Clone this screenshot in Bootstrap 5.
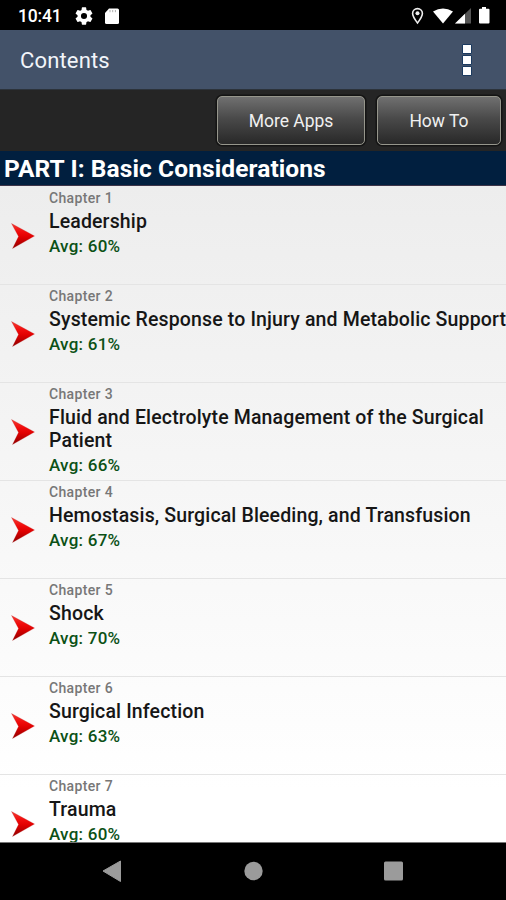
<!DOCTYPE html>
<html lang="en">
<head>
<meta charset="utf-8">
<meta name="viewport" content="width=device-width, initial-scale=1">
<title>Contents</title>
<link href="https://cdn.jsdelivr.net/npm/bootstrap@5.3.0/dist/css/bootstrap.min.css" rel="stylesheet">
<style>
body{font-family:Roboto,"Liberation Sans",sans-serif;height:900px;width:506px;background:#000}
svg{display:block;flex:none}
.status{height:30px;background:#000;color:#fff;padding:1px 15px 0 18px}
.clock{font-size:17.5px;font-weight:500;line-height:30px;width:57px;letter-spacing:-.15px}
.topbar{height:60px;background:#435269;color:#f2f5fa;padding:0 30px 0 20px;border-bottom:1px solid #2c333b}
.topbar h1{font-size:22px;font-weight:400;letter-spacing:.15px;margin:0;padding-top:4px}
.tools{height:61px;background:#252525;padding:0 5px 0 0;gap:12px}
.tool-btn{height:49px;border:1.5px solid #96968c;border-radius:5px;background:linear-gradient(#707070,#4a4a4a 45%,#282828);color:#f0f0f0;font-size:17.5px;line-height:1;padding:1.5px 0 0;box-shadow:0 0 0 1.5px #141414}
.btn-more{width:148px}.btn-how{width:124px}
.part{height:35px;background:#011f3f;color:#fff;font-size:24.5px;font-weight:700;letter-spacing:.1px;line-height:36px;padding-left:4px;border-bottom:1px solid #3d3448;margin:0;white-space:nowrap}
.chapters{height:657px;background:linear-gradient(#ededed,#fff 92%);border-bottom:1px solid #777;padding-top:1px}
.chapter{height:98px;flex:none;border-bottom:1px solid #e4e4e4;padding-left:10px}
.chapter .arrow{width:39px;padding-top:34.5px;flex:none}
.num{font-size:14px;line-height:17px;color:#777;font-weight:500;letter-spacing:.35px;margin-top:3px}
.name{font-size:19.5px;line-height:23px;color:#161616;font-weight:500;letter-spacing:.14px;margin-top:3px}
.avg{font-size:17px;line-height:20px;color:#0b5116;font-weight:500;letter-spacing:.25px;margin-top:3px}
.navkeys{height:57px;background:#000}
</style>
</head>
<body class="d-flex flex-column overflow-hidden">
<svg width="0" height="0" class="position-absolute"><defs>
<linearGradient id="red" x1="0" y1="0" x2="0" y2="1"><stop offset="0" stop-color="#f43a32"/><stop offset=".35" stop-color="#f00a0a"/><stop offset=".55" stop-color="#e00000"/><stop offset="1" stop-color="#8e0000"/></linearGradient>
<symbol id="arrow" viewBox="0 0 26 28"><path d="M1.5 1.5 24.500 14 2.500 26.500 8.500 14.500Z" fill="url(#red)" stroke="#b33" stroke-opacity=".35" stroke-width=".7"/></symbol>
</defs></svg>

<div class="status d-flex align-items-center flex-shrink-0">
  <span class="clock">10:41</span>
  <svg width="18" height="18" viewBox="2 2 20 20"><path fill="#fff" fill-rule="evenodd" d="M19.140 12.940c.04-.3.06-.61.06-.94s-.02-.64-.07-.94l2.030-1.580a.49.49 0 0 0 .12-.61l-1.920-3.320a.49.49 0 0 0-.59-.22l-2.390.96a7 7 0 0 0-1.620-.94l-.36-2.540A.48.48 0 0 0 13.920 2.400h-3.840a.48.48 0 0 0-.48.410l-.36 2.540c-.59.24-1.130.57-1.620.94l-2.390-.96a.48.48 0 0 0-.59.22L2.720 8.870a.48.48 0 0 0 .12.610l2.030 1.580a7 7 0 0 0 0 1.880l-2.030 1.580a.49.49 0 0 0-.12.610l1.920 3.320c.12.220.37.290.59.220l2.390-.96c.5.380 1.030.7 1.620.94l.36 2.540c.05.240.24.410.48.410h3.840c.24 0 .44-.17.47-.41l.36-2.540c.59-.24 1.130-.56 1.620-.94l2.390.96c.22.080.47 0 .59-.22l1.920-3.320a.48.48 0 0 0-.12-.61ZM12 15.400a3.400 3.400 0 1 1 0-6.800 3.400 3.400 0 0 1 0 6.800Z"/></svg>
  <svg class="ms-2" width="20" height="18" viewBox="0 0 20 18"><path fill="#fff" d="M8 1.500h8.500A1.500 1.500 0 0 1 18 3v12.500a1.500 1.500 0 0 1-1.500 1.500h-11A1.500 1.500 0 0 1 4 15.500V6Z"/><path stroke="#999" stroke-width=".8" d="M9 3v2.200M11.700 3v2.200M14.400 3v2.200"/></svg>
  <svg class="ms-auto" width="80" height="20" viewBox="0 0 80 20">
    <path d="M6.500 17C3.500 13 1.600 10.500 1.600 7.500a4.900 4.900 0 0 1 9.800 0C11.400 10.500 9.500 13 6.500 17Z" fill="none" stroke="#eee" stroke-width="1.600"/><circle cx="6.500" cy="7.300" r="2" fill="#eee"/>
    <path fill="#fff" d="M22 5.500Q32 -.5 42 5.500L32 17.500Z"/>
    <path fill="#555" d="M60 2v15.500H44Z"/><path fill="#fff" d="M54 7.800v9.700H44Z"/>
    <path fill="#fff" d="M71 1h4v1.800h2.500q1 0 1 1V16.500q0 1-1 1h-8.500q-1 0-1-1V3.800q0-1 1-1h2Z"/>
  </svg>
</div>

<header class="topbar d-flex align-items-center justify-content-between flex-shrink-0">
  <h1>Contents</h1>
  <svg width="18" height="38" viewBox="0 0 18 38"><g fill="#fff" stroke="#1b3a5f" stroke-width="1"><path d="M4.500 3.500h9v9h-9zM4.500 14.500h9v9h-9zM4.500 25.500h9v9h-9z"/></g></svg>
</header>

<div class="tools d-flex align-items-center justify-content-end flex-shrink-0">
  <button class="btn tool-btn btn-more">More Apps</button>
  <button class="btn tool-btn btn-how">How To</button>
</div>

<h2 class="part flex-shrink-0">PART I: Basic Considerations</h2>

<main class="chapters d-flex flex-column overflow-hidden flex-shrink-0">
  <div class="chapter d-flex"><div class="arrow"><svg width="26" height="28"><use href="#arrow"/></svg></div><div><div class="num">Chapter 1</div><div class="name">Leadership</div><div class="avg">Avg: 60%</div></div></div>
  <div class="chapter d-flex"><div class="arrow"><svg width="26" height="28"><use href="#arrow"/></svg></div><div><div class="num">Chapter 2</div><div class="name text-nowrap">Systemic Response to Injury and Metabolic Support</div><div class="avg">Avg: 61%</div></div></div>
  <div class="chapter d-flex"><div class="arrow"><svg width="26" height="28"><use href="#arrow"/></svg></div><div><div class="num">Chapter 3</div><div class="name">Fluid and Electrolyte Management of the Surgical Patient</div><div class="avg">Avg: 66%</div></div></div>
  <div class="chapter d-flex"><div class="arrow"><svg width="26" height="28"><use href="#arrow"/></svg></div><div><div class="num">Chapter 4</div><div class="name">Hemostasis, Surgical Bleeding, and Transfusion</div><div class="avg">Avg: 67%</div></div></div>
  <div class="chapter d-flex"><div class="arrow"><svg width="26" height="28"><use href="#arrow"/></svg></div><div><div class="num">Chapter 5</div><div class="name">Shock</div><div class="avg">Avg: 70%</div></div></div>
  <div class="chapter d-flex"><div class="arrow"><svg width="26" height="28"><use href="#arrow"/></svg></div><div><div class="num">Chapter 6</div><div class="name">Surgical Infection</div><div class="avg">Avg: 63%</div></div></div>
  <div class="chapter d-flex"><div class="arrow"><svg width="26" height="28"><use href="#arrow"/></svg></div><div><div class="num">Chapter 7</div><div class="name">Trauma</div><div class="avg">Avg: 60%</div></div></div>
</main>

<nav class="navkeys d-flex justify-content-center align-items-start flex-shrink-0">
  <svg width="506" height="57" viewBox="0 1 506 57" fill="#9b9b9b"><path d="M103 29 120.500 19v20.500Z" stroke="#9b9b9b" stroke-linejoin="round"/><circle cx="253.500" cy="29" r="9.200"/><rect x="384" y="19.500" width="19" height="19" rx="1.500"/></svg>
</nav>
<script src="https://cdn.jsdelivr.net/npm/bootstrap@5.3.0/dist/js/bootstrap.bundle.min.js"></script>
</body>
</html>
